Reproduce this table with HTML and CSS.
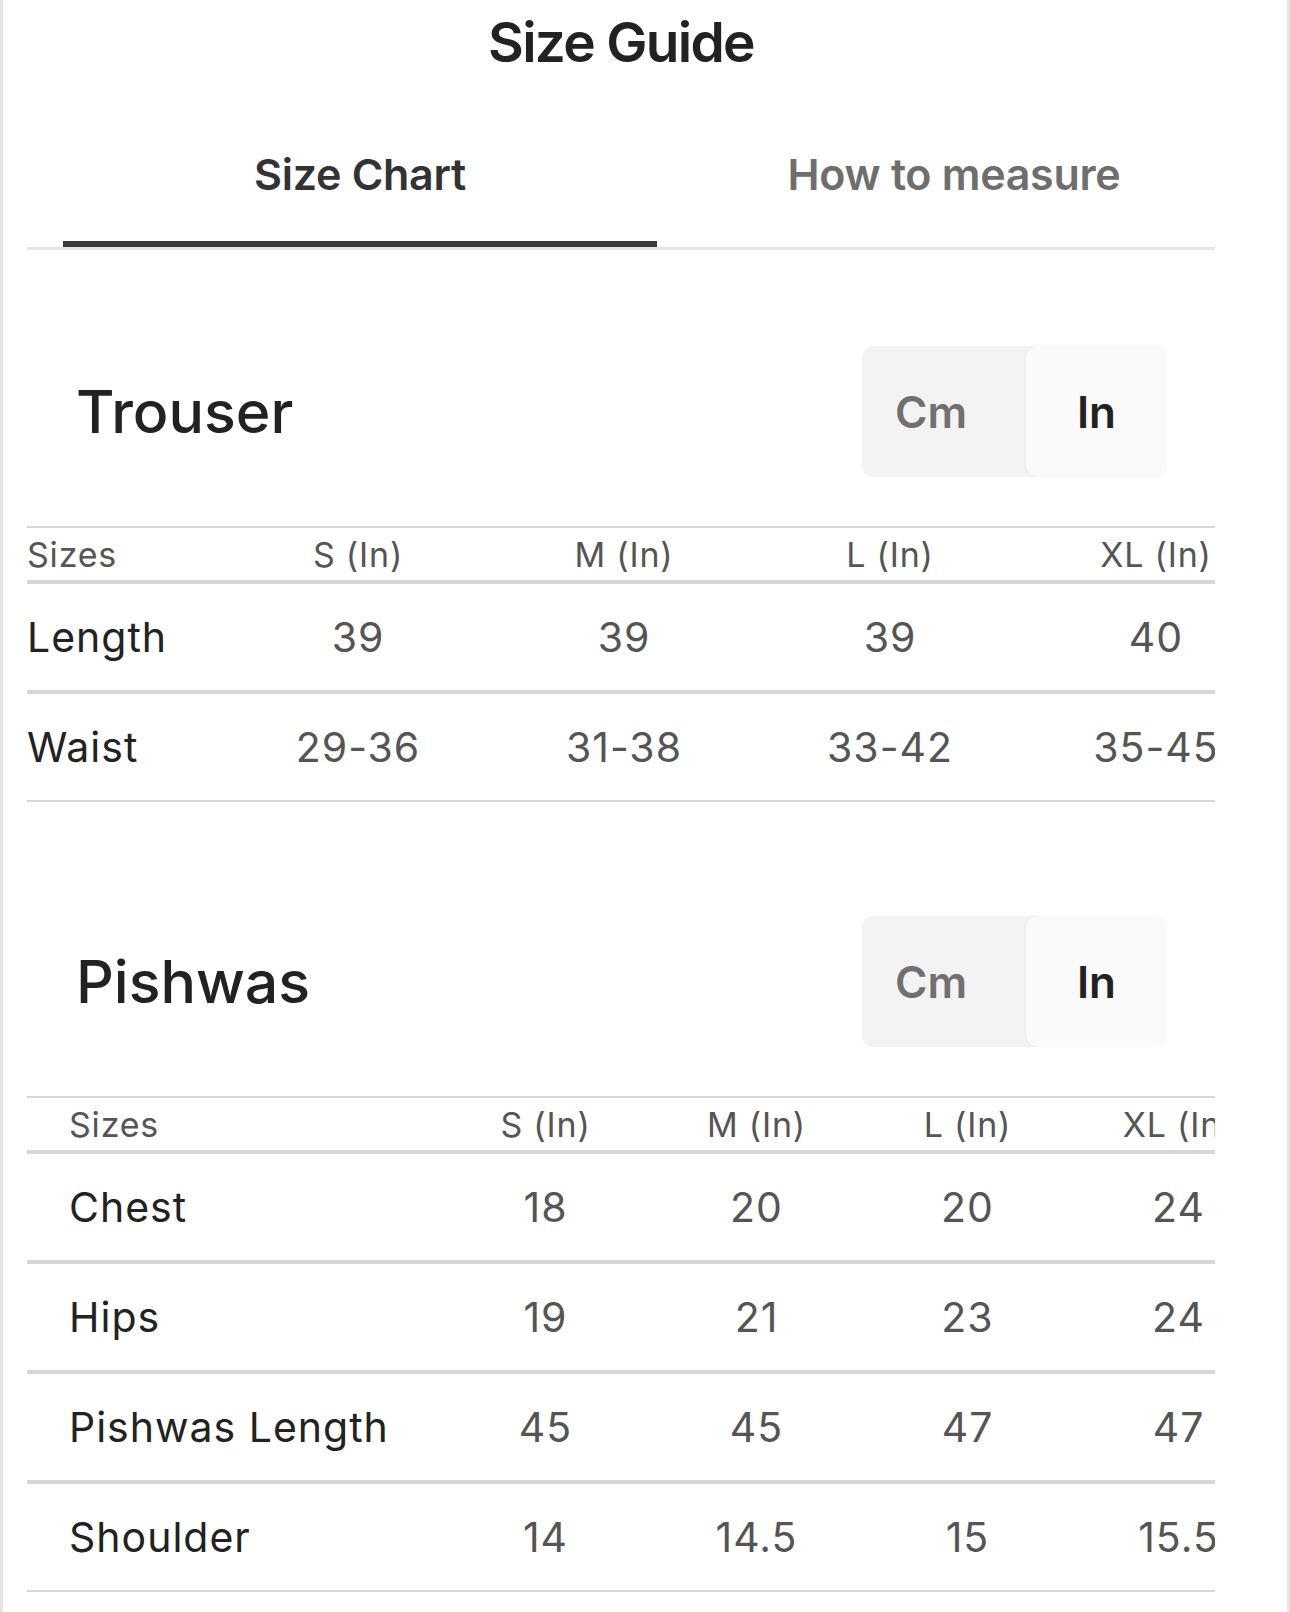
FILE: index.html
```html
<!DOCTYPE html>
<html lang="en">
<head>
<meta charset="utf-8">
<title>Size Guide</title>
<link rel="stylesheet" href="styles.css">
</head>
<body>
<div class="page">
  <h1 class="title">Size Guide</h1>

  <div class="tabs-wrap">
    <div class="tabs">
      <div class="tab active">Size Chart</div>
      <div class="tab">How to measure</div>
    </div>
  </div>

  <section class="section">
    <div class="section-head">
      <h2 class="section-title">Trouser</h2>
      <div class="toggle">
        <span class="seg seg-cm">Cm</span>
        <span class="seg seg-in">In</span>
      </div>
    </div>
    <div class="table-clip">
      <div class="chart chart-trouser">
        <div class="row head">
          <div class="label">Sizes</div><div>S (In)</div><div>M (In)</div><div>L (In)</div><div>XL (In)</div>
        </div>
        <div class="row">
          <div class="label">Length</div><div>39</div><div>39</div><div>39</div><div>40</div>
        </div>
        <div class="row last">
          <div class="label">Waist</div><div>29-36</div><div>31-38</div><div>33-42</div><div>35-45</div>
        </div>
      </div>
    </div>
  </section>

  <section class="section section-2">
    <div class="section-head">
      <h2 class="section-title">Pishwas</h2>
      <div class="toggle">
        <span class="seg seg-cm">Cm</span>
        <span class="seg seg-in">In</span>
      </div>
    </div>
    <div class="table-clip">
      <div class="chart chart-pishwas">
        <div class="row head">
          <div class="label">Sizes</div><div>S (In)</div><div>M (In)</div><div>L (In)</div><div>XL (In)</div>
        </div>
        <div class="row">
          <div class="label">Chest</div><div>18</div><div>20</div><div>20</div><div>24</div>
        </div>
        <div class="row">
          <div class="label">Hips</div><div>19</div><div>21</div><div>23</div><div>24</div>
        </div>
        <div class="row">
          <div class="label">Pishwas Length</div><div>45</div><div>45</div><div>47</div><div>47</div>
        </div>
        <div class="row last">
          <div class="label">Shoulder</div><div>14</div><div>14.5</div><div>15</div><div>15.5</div>
        </div>
      </div>
    </div>
  </section>
</div>
</body>
</html>
```

FILE: styles.css
```css
* {
  box-sizing: border-box;
}

html, body {
  margin: 0;
  padding: 0;
  background: #ffffff;
}

body {
  width: 1290px;
  height: 1612px;
  overflow: hidden;
  border-left: 3px solid #e6e6e6;
  border-right: 3px solid #e6e6e6;
  font-family: Inter, "Noto Sans", "Liberation Sans", sans-serif;
  color: #222222;
}

.page {
  width: 1284px;
  padding: 9px 72px 0 24px;
}

.title {
  margin: 0;
  font-size: 55px;
  line-height: 66px;
  font-weight: 600;
  text-align: center;
  color: #222222;
  letter-spacing: -1.7px;
}

.tabs-wrap {
  margin-top: 73px;
  border-bottom: 3px solid #e6e6e6;
}

.tabs {
  display: flex;
  margin-left: 36px;
}

.tab {
  flex: 0 0 594px;
  text-align: center;
  font-size: 43px;
  line-height: 52px;
  font-weight: 600;
  color: #6e6e6e;
  padding-bottom: 41px;
  border-bottom: 6px solid transparent;
  letter-spacing: -0.3px;
}

.tab.active {
  color: #333333;
  border-bottom-color: #3a3a3a;
}

.section {
  margin-top: 96px;
}

.section-2 {
  margin-top: 114px;
}

.section-head {
  display: flex;
  align-items: center;
  justify-content: space-between;
  padding: 0 48px 0 49px;
  margin-bottom: 49px;
}

.section-title {
  margin: 0;
  font-size: 59px;
  line-height: 72px;
  font-weight: 500;
  color: #222222;
}

.toggle {
  display: flex;
  width: 305px;
  height: 131px;
  background: #f3f3f3;
  border-radius: 12px;
}

.seg {
  display: flex;
  align-items: center;
  justify-content: center;
  font-size: 44px;
  font-weight: 600;
}

.seg-cm {
  width: 164px;
  padding-right: 26px;
  color: #707070;
}

.seg-in {
  width: 141px;
  color: #222222;
  background: #fafafa;
  border-radius: 12px;
  box-shadow: -1px 0 3px rgba(0, 0, 0, 0.04);
}

.table-clip {
  width: 1188px;
  overflow: hidden;
}

.chart {
  border-top: 2px solid #d6d6d6;
}

.chart-trouser {
  width: 1262px;
}

.chart-pishwas {
  width: 1257px;
}

.row {
  display: grid;
  align-items: center;
  height: 110px;
  border-bottom: 4px solid #d6d6d6;
  font-size: 41px;
  letter-spacing: 1px;
  color: #555555;
  text-align: center;
  white-space: nowrap;
}

.row.head {
  height: 56px;
  font-size: 34px;
  letter-spacing: 0.8px;
}

.row.last {
  height: 108px;
  border-bottom-width: 2px;
}

.chart-trouser .row {
  grid-template-columns: 198px repeat(4, 266px);
}

.chart-pishwas .row {
  grid-template-columns: 413px repeat(4, 211px);
}

.row .label {
  text-align: left;
  color: #222222;
}

.row.head .label {
  color: #555555;
}

.chart-pishwas .label {
  padding-left: 42px;
}
```
